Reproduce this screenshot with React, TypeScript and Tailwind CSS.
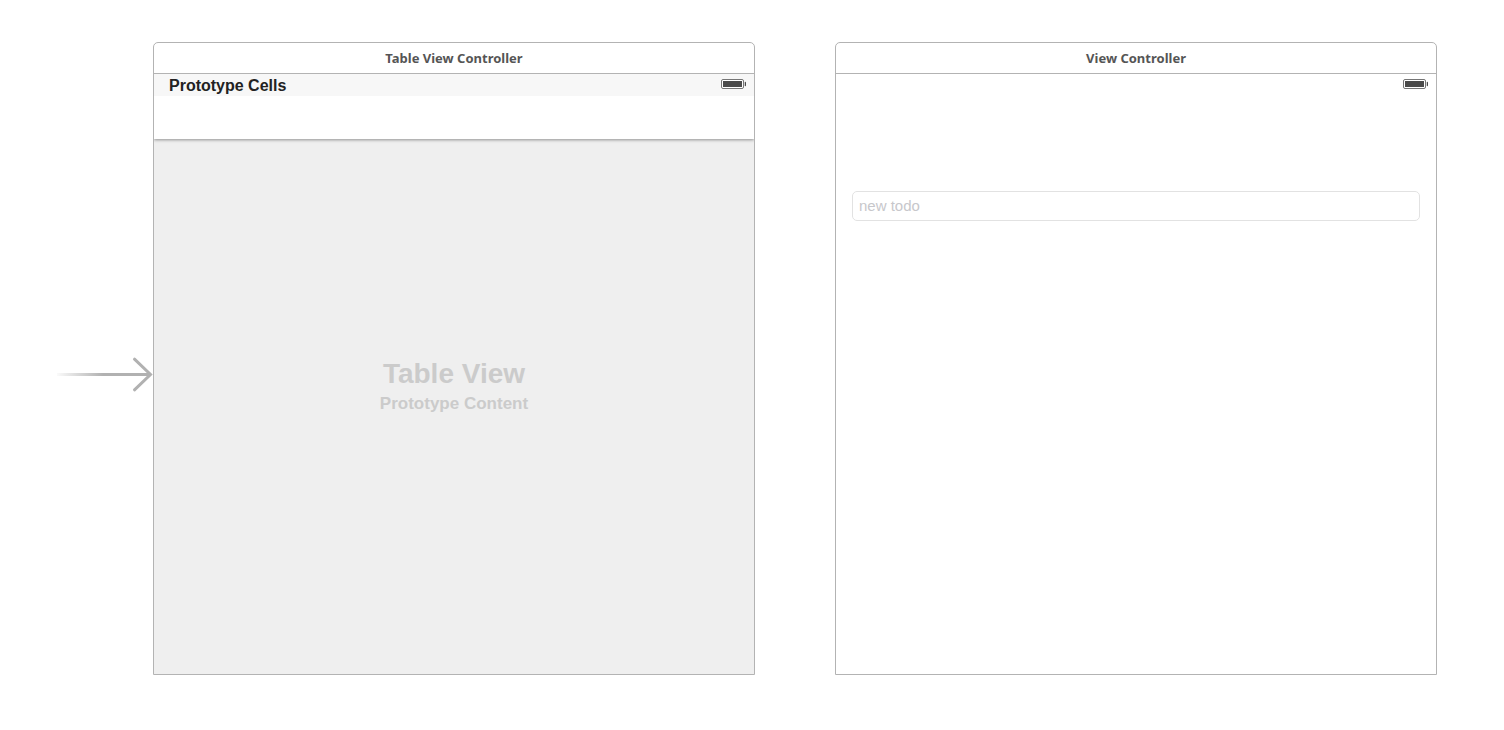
import type { ReactNode } from 'react';

function Battery() {
  return (
    <svg className="h-[10px] w-[25px]" viewBox="0 0 25 10" role="img" aria-label="Battery full">
      <rect x="0.5" y="0.5" width="22" height="9" rx="1.5" fill="#fff" stroke="#757575" />
      <rect x="2" y="2" width="19" height="6" fill="#4a4a4a" />
      <path d="M24 3h.5l.5 1v2l-.5 1H24z" fill="#4a4a4a" stroke="#4a4a4a" strokeWidth="0.5" />
    </svg>
  );
}

function EntryArrow() {
  return (
    <svg className="h-9 w-24 shrink-0" viewBox="0 0 96 36" fill="none" aria-hidden="true">
      <defs>
        <linearGradient id="fade" gradientUnits="userSpaceOnUse" x1="-3" y1="0" x2="46" y2="0">
          <stop offset="0" stopColor="#b1b1b1" stopOpacity="0" />
          <stop offset="1" stopColor="#b1b1b1" />
        </linearGradient>
      </defs>
      <rect x="0" y="16" width="93" height="3" fill="url(#fade)" />
      <path d="M77.5 2.2 93.5 17.5 77.5 32.8" stroke="#b1b1b1" strokeWidth="3" strokeLinecap="round" />
    </svg>
  );
}

function Scene({ title, children }: { title: string; children: ReactNode }) {
  return (
    <section className="flex min-w-0 flex-1 flex-col overflow-hidden rounded-t-[5px] border border-[#b3b3b3] bg-white">
      <h2 className="flex h-[31px] items-center justify-center border-b border-[#b3b3b3] pt-px font-['Noto_Sans',sans-serif] text-[13px] font-bold text-[#555]">
        {title}
      </h2>
      <div className="flex min-h-[600px] flex-1 flex-col">{children}</div>
    </section>
  );
}

export default function App() {
  return (
    <main className="flex min-h-screen bg-white pt-[42px] pr-[67px] pb-[55px] pl-[57px] font-['Liberation_Sans',Arial,sans-serif]">
      <div className="flex shrink-0 items-center pt-8">
        <EntryArrow />
      </div>
      <div className="flex min-w-0 flex-1 gap-20">
        <Scene title="Table View Controller">
          <div className="z-20 flex h-[22px] items-center justify-between bg-[#f7f7f7] pr-2 pb-[2px] pl-[15px]">
            <h3 className="pt-1 text-[16px] leading-5 font-bold text-[#222]">Prototype Cells</h3>
            <Battery />
          </div>
          <div className="z-10 h-[43px] bg-white shadow-[0_1px_3px_rgba(0,0,0,0.4)]" />
          <div className="flex flex-1 flex-col items-center bg-[#efefef] pt-[219px] font-bold text-[#cbcbcb]">
            <p className="text-[28px] leading-8">Table View</p>
            <p className="text-[17px] leading-7">Prototype Content</p>
          </div>
        </Scene>
        <Scene title="View Controller">
          <div className="flex h-[22px] items-center justify-end pr-2 pb-[2px]">
            <Battery />
          </div>
          <div className="px-4 pt-[95px]">
            <input
              type="text"
              aria-label="New todo"
              placeholder="new todo"
              className="block h-[30px] w-full rounded-[5px] border border-[#e2e2e2] bg-white px-[6px] pb-[2px] text-[15px] text-[#333] placeholder:text-[#c7c7cb]"
            />
          </div>
        </Scene>
      </div>
    </main>
  );
}
